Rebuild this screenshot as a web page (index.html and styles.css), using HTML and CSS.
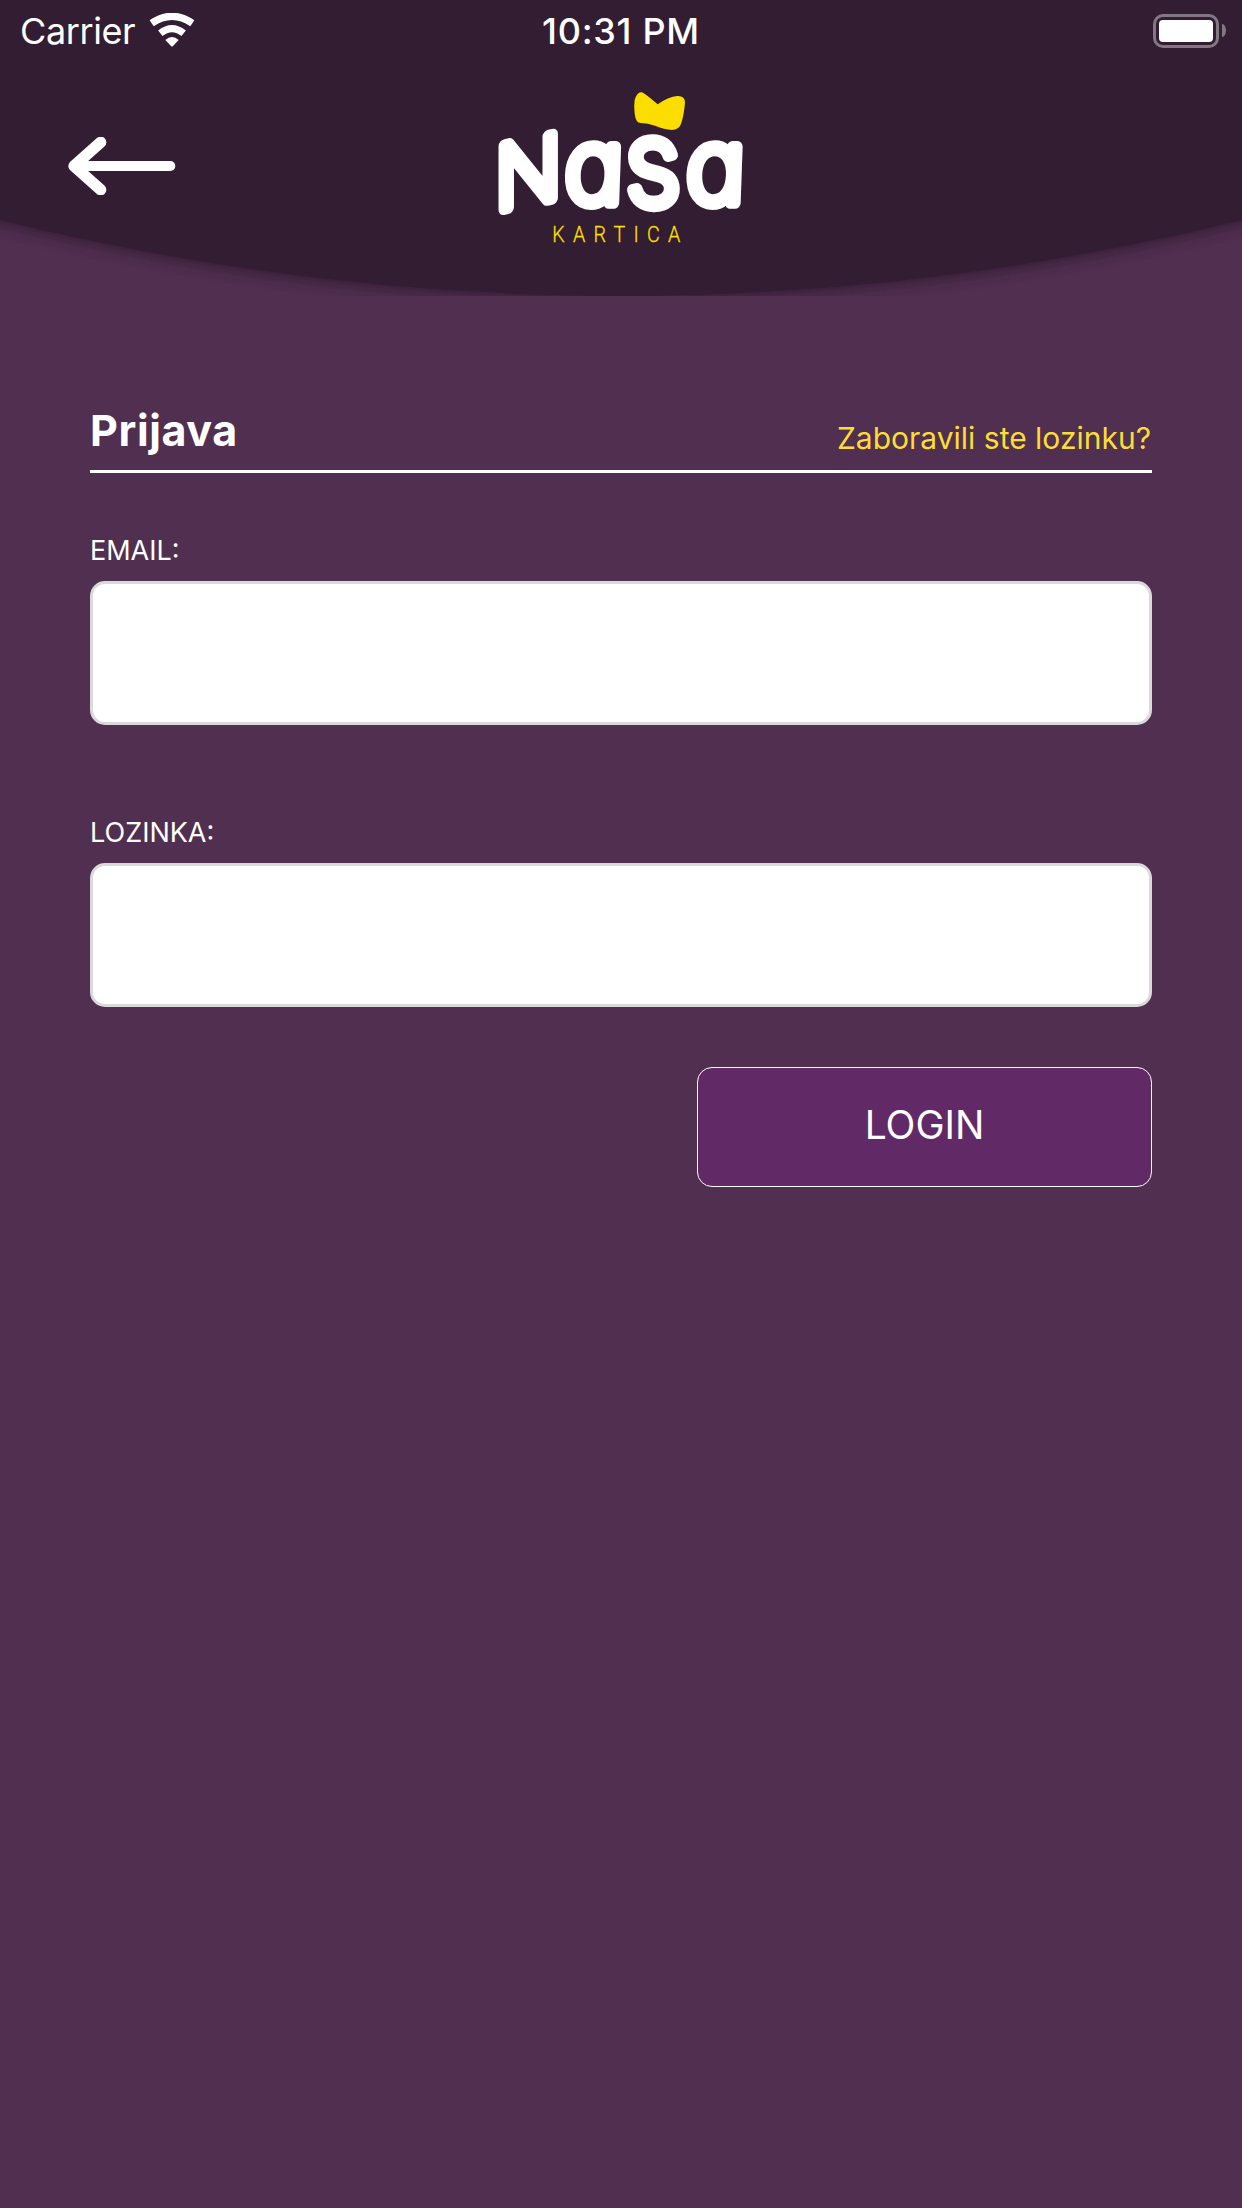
FILE: index.html
```html
<!DOCTYPE html>
<html lang="hr">
<head>
    <meta charset="UTF-8">
    <meta name="viewport" content="width=device-width, initial-scale=1.0">
    <title>Naša kartica - Prijava</title>
    <link rel="stylesheet" href="styles.css">
</head>
<body>
    <header class="header">
        <svg class="header-bg" viewBox="0 0 1242 296">
            <defs>
                <filter id="shadow" x="-5%" y="-5%" width="110%" height="120%">
                    <feGaussianBlur stdDeviation="6"/>
                </filter>
            </defs>
            <path d="M-40 -40 H1282 V210 L1242 220 Q621 372 0 220 L-40 210 Z" transform="translate(0 6)" fill="#321d32" opacity="0.7" filter="url(#shadow)"/>
            <path d="M0 0 H1242 V220 Q621 372 0 220 Z" fill="#321d32"/>
        </svg>

        <div class="status-bar">
            <div class="carrier">
                <span class="carrier-name">Carrier</span>
                <svg class="wifi" viewBox="0 0 138 102">
                    <path d="M8 31 Q69 -11 130 31" fill="none" stroke="#fff" stroke-width="22"/>
                    <path d="M34 61 Q69 33 104 61" fill="none" stroke="#fff" stroke-width="21"/>
                    <path d="M49 81 Q69 63 89 81 L72 99 Q69 102 66 99 Z" fill="#fff"/>
                </svg>
            </div>
            <div class="time">10:31 PM</div>
            <div class="battery-wrap">
                <div class="battery"><div class="battery-level"></div></div>
                <div class="battery-tip"></div>
            </div>
        </div>

        <div class="nav">
            <a class="back" href="#" aria-label="Natrag">
                <svg viewBox="0 0 324 174">
                    <path d="M98 16 L18 87 L98 158" fill="none" stroke="#fff" stroke-width="34" stroke-linecap="round" stroke-linejoin="round"/>
                    <path d="M24 87 H307" stroke="#fff" stroke-width="30" stroke-linecap="round"/>
                </svg>
            </a>
            <svg class="logo" viewBox="0 0 840 540" role="img" aria-label="Naša kartica">
                <g class="logo-name">
                    <text transform="translate(43 393) skewY(-12)" font-size="264" textLength="198" lengthAdjust="spacingAndGlyphs">N</text>
                    <text transform="translate(248 368) skewX(-2)" font-size="308" textLength="176" lengthAdjust="spacingAndGlyphs">a</text>
                    <text transform="translate(436 374) skewX(2)" font-size="352" textLength="166" lengthAdjust="spacingAndGlyphs">s</text>
                    <text transform="translate(613 368) skewX(-2)" font-size="308" textLength="176" lengthAdjust="spacingAndGlyphs">a</text>
                </g>
                <path d="M463 60 Q471 34 484 37 Q492 39 532 73 Q567 49 590 48 Q614 46 614 68 Q611 103 603 129 Q597 150 574 150 Q553 148 524 137 Q503 130 481 129 Q466 128 463 101 Q460 77 463 60 Z" transform="translate(-2 0)" fill="#fbdd00"/>
                <text class="logo-sub" transform="translate(214 486) scale(0.88 1)" textLength="436">KARTICA</text>
            </svg>
        </div>
    </header>

    <form class="login-form">
        <div class="form-head">
            <h1>Prijava</h1>
            <a class="forgot" href="#">Zaboravili ste lozinku?</a>
        </div>

        <div class="field">
            <label for="email">EMAIL:</label>
            <input type="email" id="email">
        </div>

        <div class="field">
            <label for="password">LOZINKA:</label>
            <input type="password" id="password">
        </div>

        <button type="submit" class="login-btn">LOGIN</button>
    </form>
</body>
</html>
```
FILE: styles.css
```css
* {
    box-sizing: border-box;
}

body {
    margin: 0;
    min-height: 100vh;
    background: #502f50;
    color: #fff;
    font-family: Inter, "Liberation Sans", sans-serif;
}

.header {
    position: relative;
    height: 296px;
    overflow: hidden;
}

.header-bg {
    position: absolute;
    top: 0;
    left: 0;
    width: 100%;
    height: 296px;
    z-index: -1;
}

/* status bar */
.status-bar {
    display: grid;
    grid-template-columns: 1fr auto 1fr;
    align-items: center;
    height: 60px;
    padding: 0 16px;
    font-size: 36px;
    line-height: 62px;
}

.carrier {
    display: flex;
    align-items: center;
    gap: 14px;
    padding-left: 4px;
}

.carrier-name {
    letter-spacing: -0.4px;
}

.wifi {
    width: 46px;
    height: 34px;
    margin-bottom: 2px;
}

.time {
    font-weight: 500;
    letter-spacing: 0.7px;
}

.battery-wrap {
    display: flex;
    justify-content: flex-end;
    align-items: center;
    gap: 3px;
    padding-bottom: 1px;
}

.battery {
    width: 66px;
    height: 34px;
    padding: 3px;
    border: 3px solid #847784;
    border-radius: 10px;
}

.battery-level {
    height: 22px;
    background: #fff;
    border-radius: 4px;
}

.battery-tip {
    width: 4px;
    height: 13px;
    background: #847784;
    border-radius: 0 4px 4px 0 / 0 7px 7px 0;
}

/* back arrow + logo */
.nav {
    display: grid;
    grid-template-columns: 1fr 280px 1fr;
    padding: 20px 68px 0;
}

.back {
    padding-top: 57px;
}

.back svg {
    display: block;
    width: 108px;
    height: 58px;
}

.logo {
    width: 280px;
    height: 180px;
}

.logo-name text {
    fill: #fff;
    stroke: #fff;
    stroke-width: 35;
    stroke-linejoin: round;
    font-weight: 200;
    font-feature-settings: "cv11";
}

.logo-sub {
    fill: #fbdd00;
    stroke: #fbdd00;
    stroke-width: 1;
    font-family: Roboto, sans-serif;
    font-size: 67px;
    font-weight: 300;
}

/* form */
.login-form {
    display: flex;
    flex-direction: column;
    padding: 108px 90px 0;
}

.form-head {
    display: flex;
    justify-content: space-between;
    align-items: flex-end;
    height: 69px;
    padding-bottom: 14px;
    border-bottom: 3px solid #fff;
    margin-bottom: 58px;
}

h1 {
    margin: 0;
    font-size: 43px;
    line-height: 52px;
    font-weight: 700;
    letter-spacing: 0.6px;
}

.forgot {
    padding-right: 1px;
    color: #fbdd37;
    font-size: 30px;
    line-height: 36px;
    text-decoration: none;
}

.field {
    display: flex;
    flex-direction: column;
    gap: 10px;
    margin-bottom: 88px;
}

label {
    font-size: 27px;
    line-height: 40px;
}

input {
    width: 100%;
    height: 144px;
    padding: 0 30px;
    background: #fff;
    border: 3px solid #dadada;
    border-radius: 15px;
    font-family: inherit;
    font-size: 36px;
}

.login-btn {
    align-self: flex-end;
    width: 455px;
    height: 120px;
    margin-top: -28px;
    padding: 0 0 5px;
    background: #612a66;
    border: 1px solid #fff;
    border-radius: 15px;
    color: #fff;
    font-family: inherit;
    font-size: 39px;
}
```
